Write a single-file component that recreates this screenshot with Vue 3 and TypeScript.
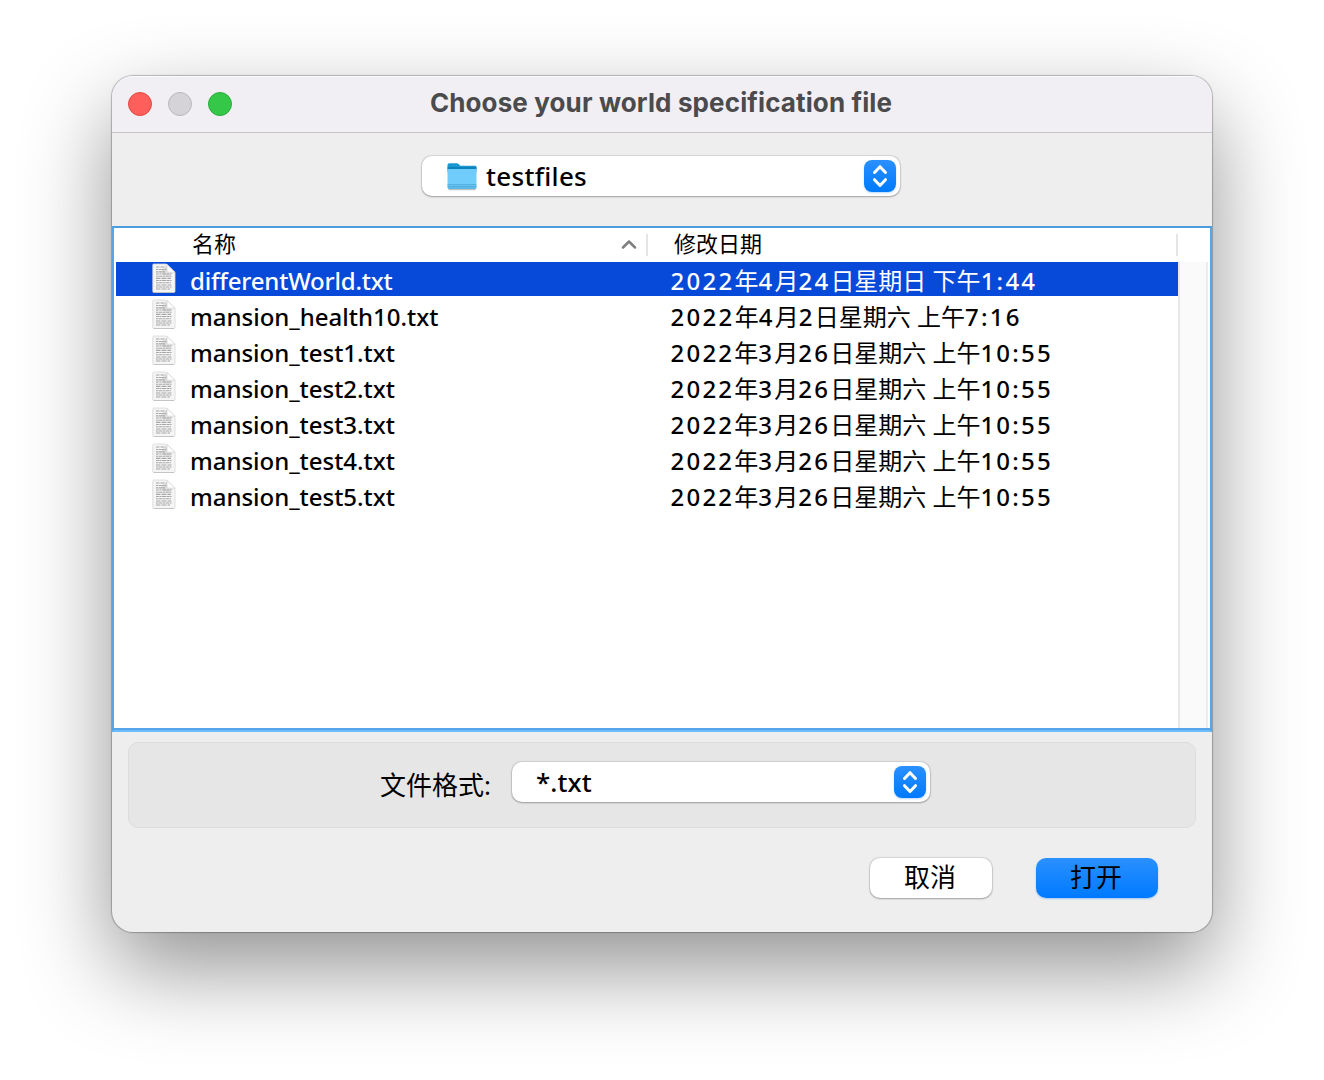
<script setup lang="ts">
interface FileRow {
  name: string
  date: string
  nameSpacing: number
  dateSpacing: number
}

const files: FileRow[] = [
  { name: 'differentWorld.txt', date: '2022年4月24日星期日 下午1:44', nameSpacing: -0.2, dateSpacing: 2.25 },
  { name: 'mansion_health10.txt', date: '2022年4月2日星期六 上午7:16', nameSpacing: 0, dateSpacing: 2.3 },
  ...[1, 2, 3, 4, 5].map((n) => ({
    name: `mansion_test${n}.txt`,
    date: '2022年3月26日星期六 上午10:55',
    nameSpacing: -0.02,
    dateSpacing: 2.22,
  })),
]

const segments = (date: string): string[] => date.match(/[\d:]+|[^\d:]+/g) ?? []
const isNumber = (part: string): boolean => /^\d/.test(part)
</script>

<template>
  <main class="desktop">
    <section class="window">
      <header class="titlebar">
        <div class="lights">
          <i class="light close"></i>
          <i class="light minimise"></i>
          <i class="light zoom"></i>
        </div>
        <h1>Choose your world specification file</h1>
      </header>

      <div class="location">
        <div class="select folder-select">
          <svg class="folder" width="32" height="32" viewBox="0 0 32 32">
            <defs>
              <linearGradient id="folderFront" x1="0" y1="0" x2="0" y2="1">
                <stop offset="0" stop-color="#6ecbfb" />
                <stop offset="0.7" stop-color="#72cdfa" />
                <stop offset="1" stop-color="#56b5e4" />
              </linearGradient>
            </defs>
            <path d="M2.500 29.600h27" stroke="#9a9a9a" stroke-opacity=".6" stroke-width="1.4" />
            <path d="M1.500 5q0-1.800 1.800-1.800h7.600q1 0 1.800.9l1.500 1.600H29.300q1.200 0 1.200 1.300V12H1.500z" fill="#1a97d0" />
            <path d="M1.500 8h29" stroke="#0a7cb8" stroke-width="1.5" />
            <path d="M1.500 10.300q0-1.300 1.300-1.300h26.400q1.300 0 1.300 1.300v17.200q0 1.500-1.500 1.500H3q-1.500 0-1.500-1.500z" fill="url(#folderFront)" />
            <path d="M1.500 24.500h29M1.500 26.500h29" stroke="#48a5d3" stroke-width=".6" />
          </svg>
          <span class="select-text">testfiles</span>
          <span class="stepper">
            <svg width="32" height="32" viewBox="0 0 32 32"><path d="M10.500 12.500 16 6.700l5.500 5.800M10.500 19.700l5.500 5.800 5.500-5.800" /></svg>
          </span>
        </div>
      </div>

      <div class="table">
        <div class="head">
          <div class="head-name">
            <span class="head-text">名称</span>
            <svg width="16" height="10" viewBox="0 0 16 10"><path d="m2 7.500 6-6 6 6" /></svg>
          </div>
          <div class="head-date"><span class="head-text">修改日期</span></div>
        </div>
        <div class="body">
          <div class="rows">
            <div v-for="(file, index) in files" :key="file.name" class="row" :class="{ selected: index === 0 }">
              <svg class="doc" width="26" height="32" viewBox="0 0 26 32">
                <path d="M1.500 1h13L23 9.500v18.700q0 1.300-1.300 1.300H1.800Q.8 29.500.8 28.200V2.300Q.8 1 1.500 1z" fill="#f5f5f5" stroke="#d8d8d8" stroke-width=".8" />
                <path d="M1.500 29.500h20.500" stroke="#c2c2c2" stroke-width=".9" />
                <path d="M9 8l6-5.500v7H21l-3 3h-6z" fill="#999" opacity=".25" />
                <path d="M15 1.500v6.500q0 1.200 1.200 1.200H23z" fill="#fff" stroke="#d0d0d0" stroke-width=".7" />
                <g stroke="#a6a6a6" stroke-width="1.150">
                  <path d="M4 4h10" stroke-dasharray="3 .5 1 .5" />
                  <path d="M4 6.500h10.500" stroke-dasharray="2 .6 3 .4" />
                  <path d="M4 11h15.500M4 17.500h15.500" stroke-dasharray="3 .5 2 .6 4 .5" />
                  <path d="M4 8.800h9M4 13.200h15.500M4 19.700h15M4 24h15.500" stroke-dasharray="2 .5 4 .5" />
                  <path d="M4 15.400h15M4 22h15.500M4 26h14" stroke-dasharray="4 .6 1 .4" />
                </g>
              </svg>
              <span class="file-name" :style="{ letterSpacing: `${file.nameSpacing}px` }">{{ file.name }}</span>
              <span class="file-date"><span
                v-for="(part, i) in segments(file.date)"
                :key="i"
                :class="{ number: isNumber(part) }"
                :style="{ letterSpacing: isNumber(part) ? `${file.dateSpacing}px` : '0' }"
              >{{ part }}</span></span>
            </div>
          </div>
          <div class="track"></div>
        </div>
      </div>

      <div class="filter">
        <label>文件格式:</label>
        <div class="select format-select">
          <span class="select-text">*.txt</span>
          <span class="stepper">
            <svg width="32" height="32" viewBox="0 0 32 32"><path d="M10.500 12.500 16 6.700l5.500 5.800M10.500 19.700l5.500 5.800 5.500-5.800" /></svg>
          </span>
        </div>
      </div>

      <footer class="actions">
        <button type="button">取消</button>
        <button type="button" class="primary">打开</button>
      </footer>
    </section>
  </main>
</template>

<style>
html,
body {
  margin: 0;
  background: #fff;
}
</style>

<style scoped>
* {
  box-sizing: border-box;
}

.desktop {
  width: 1324px;
  height: 1080px;
  padding: 76px 112px 0;
  overflow: hidden;
  background: #fff;
  color: #000;
  font-family: "Noto Sans", "Noto Sans CJK SC", sans-serif;
}

.window {
  display: flex;
  flex-direction: column;
  width: 1100px;
  height: 856px;
  overflow: hidden;
  border-radius: 21px;
  background: #eee;
  box-shadow: 0 0 1px 1px rgba(0, 0, 0, 0.25), 0 36px 88px rgba(0, 0, 0, 0.43);
}

.titlebar {
  display: grid;
  grid-template-columns: 200px 1fr 202px;
  flex: none;
  height: 57px;
  border-bottom: 1px solid #c8c6c9;
  box-shadow: inset 0 1px #faf9fb;
  background: #f1eff4;
}

.lights {
  display: flex;
  gap: 16px;
  padding: 16px;
}

.light {
  width: 24px;
  height: 24px;
  border: 1px solid #e14942;
  border-radius: 50%;
  background: #ff5f5a;
}

.minimise {
  border-color: #b9b7bc;
  background: #d5d3d8;
}

.zoom {
  border-color: #2cac3b;
  background: #34c748;
}

h1 {
  margin: 0;
  color: #4b4a4d;
  font: 700 26px/54px Inter, sans-serif;
  letter-spacing: 0.12px;
  text-align: center;
  white-space: nowrap;
}

.location {
  flex: none;
  height: 93px;
  padding: 23px 0 0 310px;
}

.select {
  display: flex;
  align-items: center;
  height: 40px;
  padding-right: 4px;
  border-radius: 10px;
  background: #fff;
  box-shadow: 0 0 1px 0.5px rgba(0, 0, 0, 0.1), 0 1px 2px rgba(0, 0, 0, 0.25);
}

.folder-select {
  width: 478px;
  padding-left: 24px;
}

.folder {
  margin-right: 8px;
}

.select-text {
  flex: 1;
  font-size: 26px;
  font-weight: 500;
  line-height: 40px;
  letter-spacing: 0.3px;
}

.stepper {
  width: 32px;
  height: 32px;
  border-radius: 8px;
  background: linear-gradient(#2a90ff, #007aff);
  box-shadow: 0 1px 2px rgba(0, 122, 255, 0.3);
}

.stepper svg {
  display: block;
  fill: none;
  stroke: #fff;
  stroke-width: 3;
  stroke-linecap: round;
  stroke-linejoin: round;
}

.table {
  display: flex;
  flex: none;
  flex-direction: column;
  height: 506px;
  border: 2px solid #56a5e6;
  border-top-color: #4a9ee0;
  border-bottom: 2px solid #6cbcfb;
  box-shadow: inset 0 -2px #56a5ea;
  background: #fff;
}

.head {
  display: flex;
  flex: none;
  align-items: center;
  height: 34px;
  font-size: 22px;
  line-height: 30px;
}

.head-name {
  display: flex;
  align-items: center;
  justify-content: space-between;
  width: 534px;
  height: 22px;
  padding: 0 9px 0 78px;
  border-right: 2px solid #e5e5e5;
}

.head-text {
  padding-bottom: 4px;
}

.head-name svg {
  fill: none;
  stroke: #808080;
  stroke-width: 2.5;
  stroke-linecap: round;
  stroke-linejoin: round;
}

.head-date {
  display: flex;
  align-items: center;
  width: 530px;
  height: 22px;
  padding-left: 26px;
  border-right: 2px solid #e5e5e5;
}

.body {
  display: flex;
  flex: 1;
  margin-bottom: 2px;
  padding-left: 2px;
}

.rows {
  width: 1062px;
}

.row {
  display: flex;
  align-items: flex-start;
  height: 34px;
  margin-bottom: 2px;
  padding-left: 35px;
  font-size: 24px;
  font-weight: 500;
  line-height: 38px;
  white-space: pre;
}

.selected {
  background: #0749d9;
  color: #fff;
}

.doc {
  flex: none;
  margin: 1px 12px 0 1px;
}

.file-name {
  width: 480.5px;
}

.file-date {
  font-weight: 400;
}

.number {
  font-weight: 500;
}

.track {
  width: 30px;
  border-right: 2px solid #ececec;
  border-left: 2px solid #e8e8e8;
  background: #fafafa;
}

.filter {
  display: flex;
  flex: none;
  width: 1068px;
  height: 86px;
  margin: 10px 16px 0;
  padding: 19px 0 0 251px;
  border: 1px solid #dcdcdc;
  border-radius: 10px;
  background: #e6e6e6;
}

.filter label {
  width: 132px;
  font-size: 26px;
  line-height: 46px;
}

.format-select {
  width: 418px;
  padding-left: 24px;
}

.format-select .select-text {
  letter-spacing: 0.1px;
}

.actions {
  display: flex;
  justify-content: flex-end;
  gap: 44px;
  padding: 30px 54px 0 0;
}

button {
  width: 122px;
  height: 40px;
  padding: 0 2px 4px 0;
  border: 0;
  border-radius: 10px;
  background: #fff;
  box-shadow: 0 0 1px 0.5px rgba(0, 0, 0, 0.1), 0 1px 2px rgba(0, 0, 0, 0.25);
  color: #000;
  font: 400 26px/36px "Noto Sans CJK SC", sans-serif;
}

.primary {
  background: linear-gradient(#2a90ff, #007aff);
  box-shadow: 0 1px 2px rgba(0, 122, 255, 0.35);
}
</style>
